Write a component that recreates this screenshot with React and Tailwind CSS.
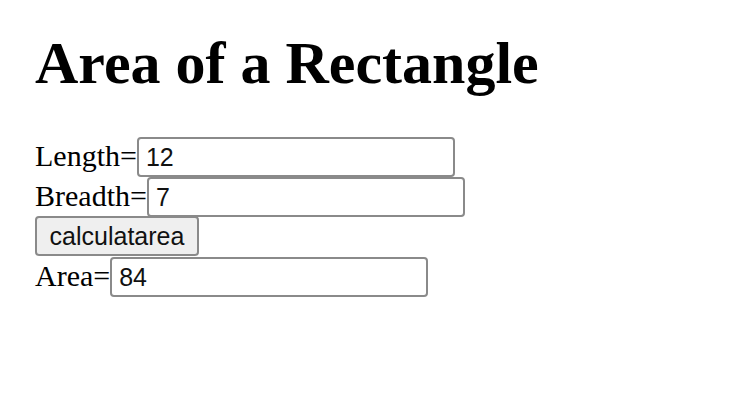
import React, { useState } from 'react';

const inputCls =
  "h-[40px] w-[318px] border-2 border-[#8a8a8a] rounded-[4px] bg-white pl-[7px] text-[25px] text-[#111] font-['Liberation_Sans',Arial,sans-serif] outline-none";

const App = () => {
  const [length, setLength] = useState('12');
  const [breadth, setBreadth] = useState('7');
  const [area, setArea] = useState('84');

  return (
    <div className="min-h-[412px] bg-white px-[35px] pt-[27px] text-black font-['Liberation_Serif','Times_New_Roman',serif]">
      <h1 className="text-[60px] font-bold leading-[72px] mb-[37px]">Area of a Rectangle</h1>

      <div className="flex h-[40px] items-baseline text-[30px] leading-[40px]">
        <span>Length=</span>
        <input className={inputCls} value={length} onChange={(e) => setLength(e.target.value)} />
      </div>
      <div className="flex h-[40px] items-baseline text-[30px] leading-[40px]">
        <span>Breadth=</span>
        <input className={inputCls} value={breadth} onChange={(e) => setBreadth(e.target.value)} />
      </div>
      <div className="flex h-[40px]">
        <button
          className="h-[40px] w-[164px] border-2 border-[#8a8a8a] rounded-[4px] bg-[#efefef] text-[25px] text-[#111] font-['Liberation_Sans',Arial,sans-serif]"
          onClick={() => setArea(String(Number(length) * Number(breadth)))}
        >
          calculatarea
        </button>
      </div>
      <div className="flex h-[40px] items-baseline text-[30px] leading-[40px]">
        <span>Area=</span>
        <input className={inputCls} value={area} onChange={(e) => setArea(e.target.value)} />
      </div>
    </div>
  );
};

export default App;
